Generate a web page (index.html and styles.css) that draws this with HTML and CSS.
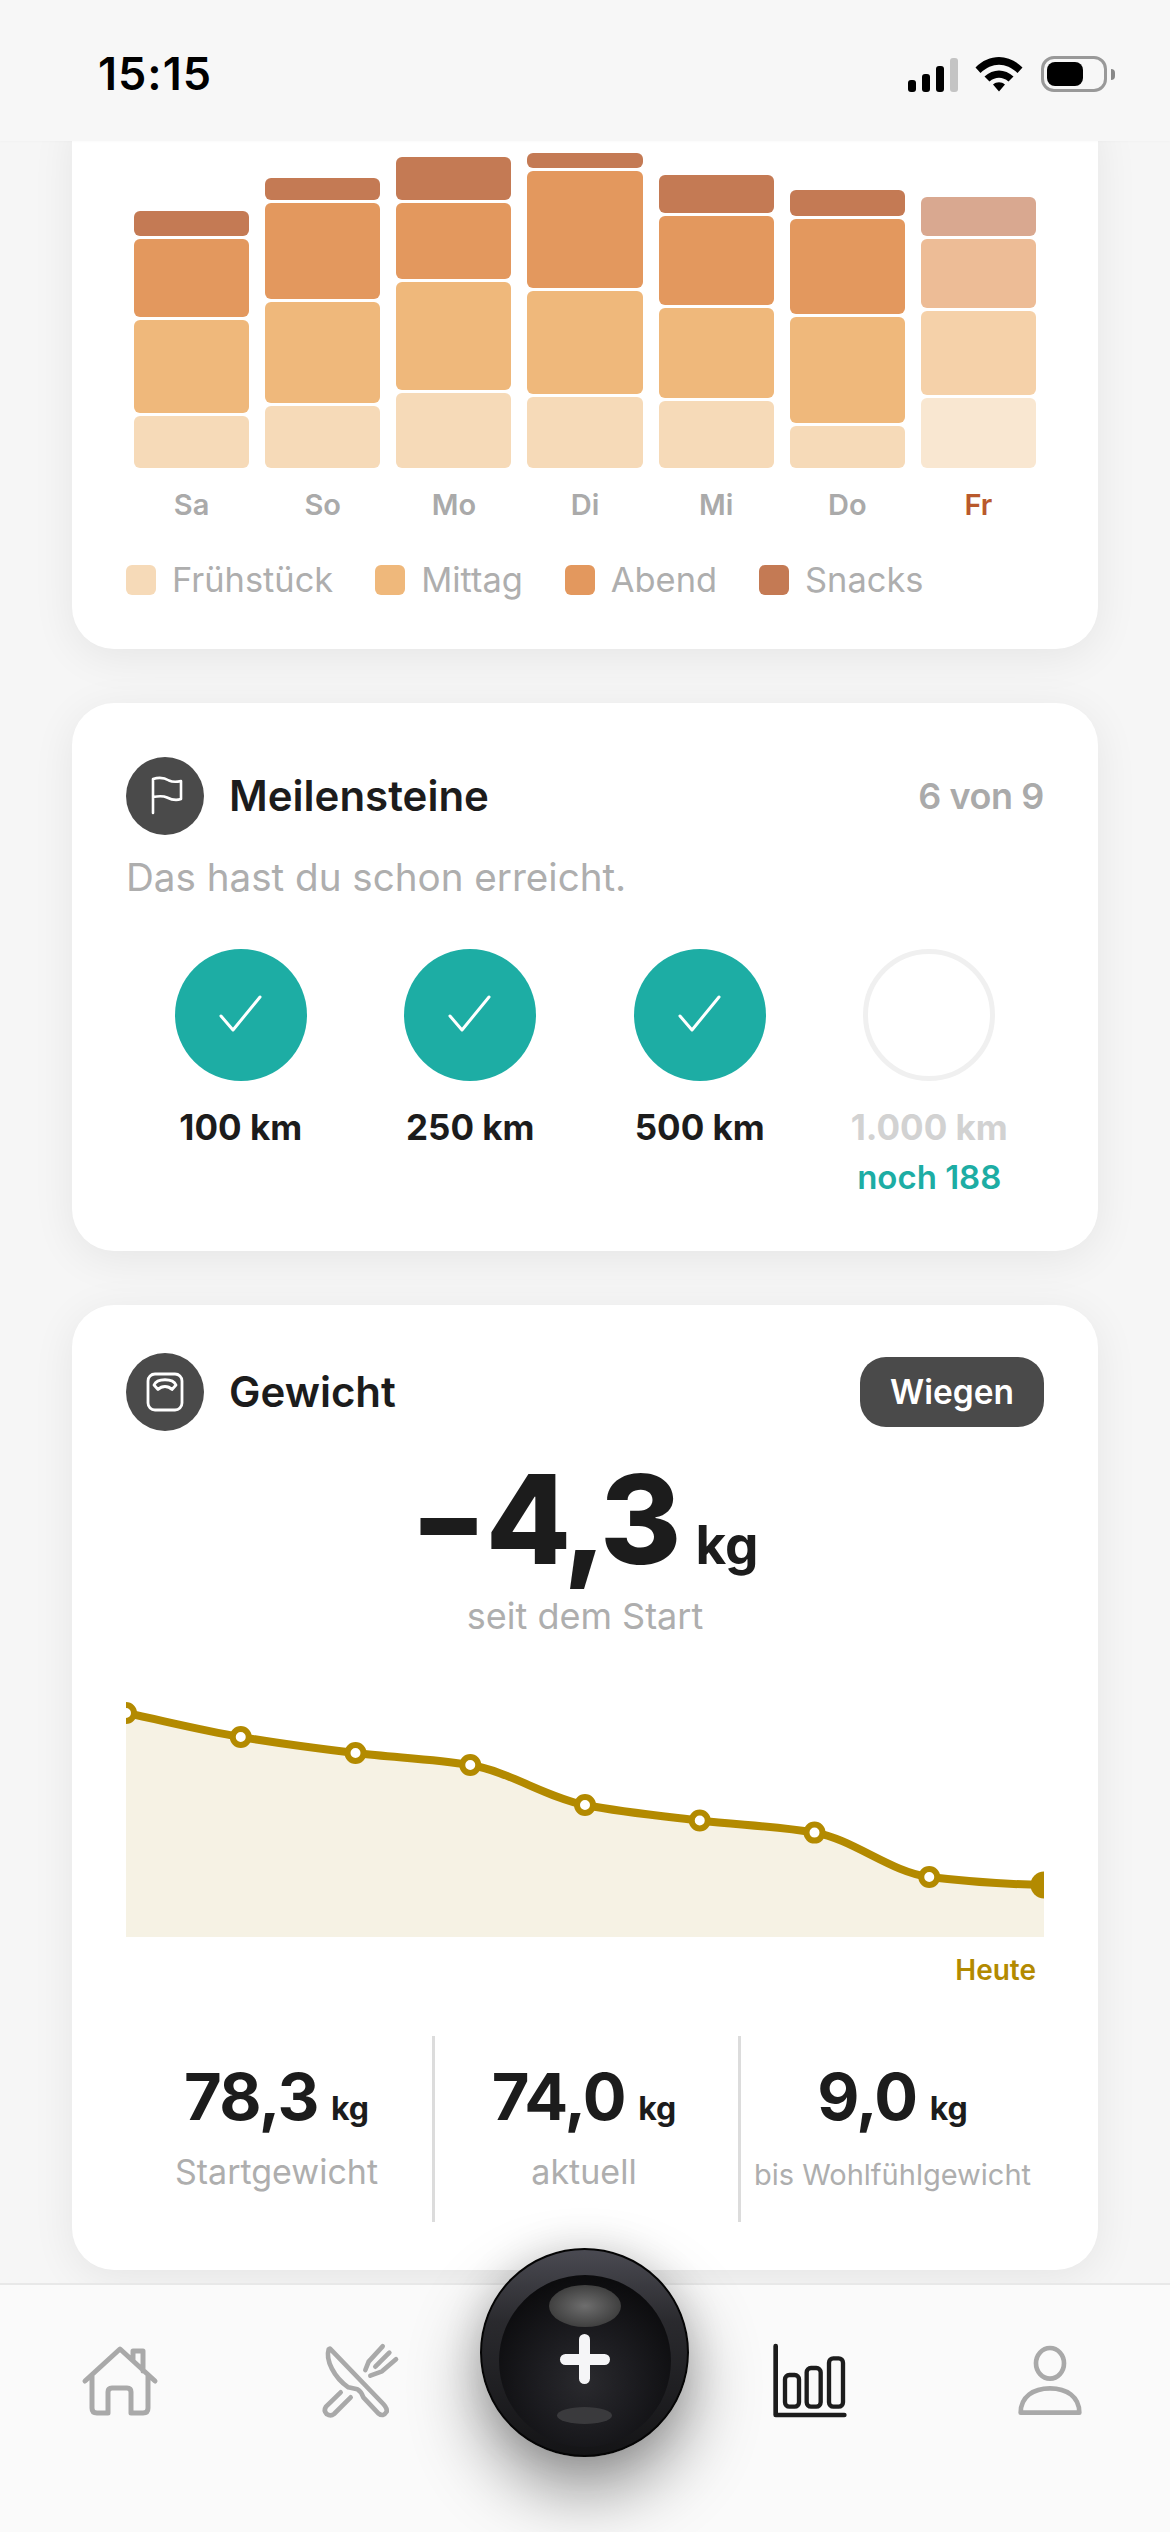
FILE: index.html
```html
<!DOCTYPE html>
<html lang="de">
<head>
<meta charset="utf-8">
<title>Statistik</title>
<link rel="stylesheet" href="styles.css">
</head>
<body>
<div class="app">
  <header class="status">
    <span class="time">15:15</span>
    <div class="status-icons">
      <div class="signal"><i class="s1"></i><i class="s2"></i><i class="s3"></i><i class="s4"></i></div>
      <svg class="wifi" viewBox="0 0 48 36" width="48" height="36"><path d="M0.5 11.5 C14 -2.5 34 -2.5 47.5 11.5 L42.5 17 C31 6 17 6 5.5 17 Z M9.5 20.5 C18 12.5 30 12.5 38.5 20.5 L33.5 25.5 C27.5 20.5 20.5 20.5 14.5 25.5 Z M18 28.5 C21.5 25.5 26.5 25.5 30 28.5 L24 35.5 Z" fill="#000"/></svg>
      <div class="battery"><div class="battery-body"><div class="battery-fill"></div></div><div class="battery-nub"></div></div>
    </div>
  </header>

  <main class="scroll">
    <section class="card card-meals">
      <div class="bars">
        <div class="bar"><div class="seg snack" style="height:25px"></div><div class="seg dinner" style="height:78px"></div><div class="seg lunch" style="height:93px"></div><div class="seg breakfast" style="height:52px"></div></div>
        <div class="bar"><div class="seg snack" style="height:22px"></div><div class="seg dinner" style="height:96px"></div><div class="seg lunch" style="height:101px"></div><div class="seg breakfast" style="height:62px"></div></div>
        <div class="bar"><div class="seg snack" style="height:43px"></div><div class="seg dinner" style="height:76px"></div><div class="seg lunch" style="height:108px"></div><div class="seg breakfast" style="height:75px"></div></div>
        <div class="bar"><div class="seg snack" style="height:15px"></div><div class="seg dinner" style="height:117px"></div><div class="seg lunch" style="height:103px"></div><div class="seg breakfast" style="height:71px"></div></div>
        <div class="bar"><div class="seg snack" style="height:38px"></div><div class="seg dinner" style="height:89px"></div><div class="seg lunch" style="height:90px"></div><div class="seg breakfast" style="height:67px"></div></div>
        <div class="bar"><div class="seg snack" style="height:26px"></div><div class="seg dinner" style="height:95px"></div><div class="seg lunch" style="height:106px"></div><div class="seg breakfast" style="height:42px"></div></div>
        <div class="bar today"><div class="seg snack" style="height:39px"></div><div class="seg dinner" style="height:69px"></div><div class="seg lunch" style="height:84px"></div><div class="seg breakfast" style="height:70px"></div></div>
      </div>
      <div class="days">
        <span>Sa</span><span>So</span><span>Mo</span><span>Di</span><span>Mi</span><span>Do</span><span class="day-today">Fr</span>
      </div>
      <div class="legend">
        <div class="legend-item"><i class="swatch breakfast"></i>Frühstück</div>
        <div class="legend-item"><i class="swatch lunch"></i>Mittag</div>
        <div class="legend-item"><i class="swatch dinner"></i>Abend</div>
        <div class="legend-item"><i class="swatch snack"></i>Snacks</div>
      </div>
    </section>

    <section class="card card-miles">
      <div class="card-head">
        <div class="head-left">
          <div class="round-icon">
            <svg viewBox="0 0 40 40" width="40" height="40" fill="none" stroke="#fff" stroke-width="2.6" stroke-linecap="round" stroke-linejoin="round"><path d="M8 37 V3 C14 1 20 2 24 4.500 C28 6.500 32 6 36 5 V23 C32 24.500 27 24 22 21.500 C18 19.500 13 20 8 21"/></svg>
          </div>
          <h2 class="card-title">Meilensteine</h2>
        </div>
        <span class="count">6 von 9</span>
      </div>
      <p class="sub">Das hast du schon erreicht.</p>
      <div class="miles">
        <div class="mile"><div class="mile-circle done"><svg viewBox="0 0 44 38" width="44" height="38" fill="none" stroke="#fff" stroke-width="3" stroke-linecap="round" stroke-linejoin="round"><path d="M2 21 L14 35 L41 2"/></svg></div><div class="mile-label">100 km</div></div>
        <div class="mile"><div class="mile-circle done"><svg viewBox="0 0 44 38" width="44" height="38" fill="none" stroke="#fff" stroke-width="3" stroke-linecap="round" stroke-linejoin="round"><path d="M2 21 L14 35 L41 2"/></svg></div><div class="mile-label">250 km</div></div>
        <div class="mile"><div class="mile-circle done"><svg viewBox="0 0 44 38" width="44" height="38" fill="none" stroke="#fff" stroke-width="3" stroke-linecap="round" stroke-linejoin="round"><path d="M2 21 L14 35 L41 2"/></svg></div><div class="mile-label">500 km</div></div>
        <div class="mile"><div class="mile-circle open"></div><div class="mile-label muted">1.000 km</div><div class="mile-left">noch 188</div></div>
      </div>
    </section>

    <section class="card card-weight">
      <div class="card-head">
        <div class="head-left">
          <div class="round-icon">
            <svg viewBox="0 0 40 40" width="40" height="40" fill="none" stroke="#fff" stroke-width="2.8" stroke-linecap="round" stroke-linejoin="round"><rect x="3" y="2" width="34" height="36" rx="7"/><path d="M9 13 C12 6 28 6 31 13 L27 17.500 C23 13.500 17 13.500 13 17.500 Z"/></svg>
          </div>
          <h2 class="card-title">Gewicht</h2>
        </div>
        <button class="weigh">Wiegen</button>
      </div>
      <div class="big"><span class="big-num"><span class="minus">−</span>4,3</span><span class="big-unit">kg</span></div>
      <p class="since">seit dem Start</p>
      <svg class="line-chart" viewBox="0 0 918 237" width="918" height="237">
        <path fill="#f6f2e4" d="M0,13 C38.25,21 76.5,30.6 114.75,37 C153,43.4 191.25,48.4 229.5,53 C267.75,57.6 306,58.8 344.25,65 C382.5,71.2 420.75,97.6 459,105 C497.25,112.4 535.5,116 573.75,120.5 C612,125 650.25,126.3 688.5,132.6 C726.75,138.9 765,172.5 803.25,177 C841.5,181.5 879.75,184.3 918,185 L918,237 L0,237 Z"/>
        <path fill="none" stroke="#b38a00" stroke-width="8" stroke-linecap="round" d="M0,13 C38.25,21 76.5,30.6 114.75,37 C153,43.4 191.25,48.4 229.5,53 C267.75,57.6 306,58.8 344.25,65 C382.5,71.2 420.75,97.6 459,105 C497.25,112.4 535.5,116 573.75,120.5 C612,125 650.25,126.3 688.5,132.6 C726.75,138.9 765,172.5 803.25,177 C841.5,181.5 879.75,184.3 918,185"/>
        <g fill="#fff" stroke="#b38a00" stroke-width="6">
          <circle cx="0" cy="13" r="8"/><circle cx="114.75" cy="37" r="8"/><circle cx="229.5" cy="53" r="8"/><circle cx="344.25" cy="65" r="8"/><circle cx="459" cy="105" r="8"/><circle cx="573.75" cy="120.5" r="8"/><circle cx="688.5" cy="132.6" r="8"/><circle cx="803.25" cy="177" r="8"/>
        </g>
        <circle cx="918" cy="185" r="13.500" fill="#b38a00"/>
      </svg>
      <div class="today-label">Heute</div>
      <div class="stats">
        <div class="stat"><div class="stat-val">78,3<span class="stat-unit">kg</span></div><div class="stat-name">Startgewicht</div></div>
        <div class="stat"><div class="stat-val">74,0<span class="stat-unit">kg</span></div><div class="stat-name">aktuell</div></div>
        <div class="stat stat-last"><div class="stat-val">9,0<span class="stat-unit">kg</span></div><div class="stat-name small">bis Wohlfühlgewicht</div></div>
      </div>
    </section>
  </main>

  <nav class="nav">
    <div class="nav-group">
      <svg class="nav-icon" viewBox="0 0 80 80" width="80" height="80" fill="none" stroke="#a9a9a9" stroke-width="5" stroke-linecap="round" stroke-linejoin="round"><path d="M5 41 L40 9 L75 41 M53 20 V11 H63 V31 M12 35 V68 Q12 73 17 73 H28 V52 Q28 48 32 48 H47 Q51 48 51 52 V73 H63 Q68 73 68 68 V35"/></svg>
      <svg class="nav-icon" viewBox="660 90 240 240" width="80" height="80" fill="none" stroke="#a9a9a9" stroke-width="14" stroke-linecap="round" stroke-linejoin="round"><path d="M686 118 C676 150 702 202 745 232 L772 238 Q784 245 790 262 L835 310 Q850 322 860 305 Q862 295 850 282 L690 116 Z M722 247 L678 290 Q670 302 680 312 Q692 320 702 312 L752 262 M848 109 L806 155 L796 180 M888 148 L846 184 L811 197 M868 128 L826 170"/></svg>
    </div>
    <div class="nav-group">
      <svg class="nav-icon" viewBox="60 90 240 240" width="80" height="80" fill="none" stroke="#1c1c1c" stroke-linecap="round" stroke-linejoin="round"><path stroke-width="14" d="M77 108 V315 H283"/><g stroke-width="13"><rect x="105" y="195" width="42" height="95" rx="13"/><rect x="170" y="174" width="42" height="116" rx="13"/><rect x="237" y="145" width="42" height="145" rx="13"/></g></svg>
      <svg class="nav-icon" viewBox="780 90 240 240" width="80" height="80" fill="none" stroke="#a9a9a9" stroke-width="14" stroke-linecap="round" stroke-linejoin="round"><ellipse cx="900" cy="160" rx="42" ry="46"/><path d="M812 308 C812 260 850 235 900 235 C950 235 988 260 988 308 Z"/></svg>
    </div>
    <button class="fab" aria-label="Hinzufügen">
      <span class="fab-inner">
        <span class="fab-glow"></span>
        <span class="fab-plus"></span>
        <span class="fab-low"></span>
      </span>
    </button>
  </nav>
</div>
</body>
</html>
```

FILE: styles.css
```css
* { box-sizing: border-box; }
html, body { margin: 0; padding: 0; }
body { background: #f6f6f6; font-family: "Inter", "Liberation Sans", sans-serif; color: #1c1c1c; }
h2, p { margin: 0; }

.app { width: 1170px; height: 2532px; display: flex; flex-direction: column; overflow: hidden; position: relative; }

/* status bar */
.status { height: 141px; flex: none; background: #f7f7f7; display: flex; justify-content: space-between; align-items: flex-start; padding: 51px 55px 0 98px; position: relative; z-index: 2; box-shadow: 0 1px 2px rgba(0,0,0,.02); }
.time { font-size: 45px; line-height: 46px; font-weight: 600; color: #000; letter-spacing: 1px; }
.status-icons { display: flex; align-items: flex-start; gap: 0; padding-top: 5px; }
.signal { display: flex; align-items: flex-end; gap: 5.5px; height: 35px; margin-top: 1px; margin-right: 17px; }
.signal i { display: block; width: 8.500px; border-radius: 3px; background: #000; }
.s1 { height: 12px; }
.s2 { height: 18px; }
.s3 { height: 26px; }
.signal .s4 { height: 34px; background: #c4c4c4; }
.wifi { margin-right: 18px; }
.battery { display: flex; align-items: center; height: 36px; }
.battery-body { width: 66px; height: 36px; border: 3px solid #999; border-radius: 13px; padding: 3px; }
.battery-fill { width: 36px; height: 24px; background: #000; border-radius: 8px; }
.battery-nub { width: 4px; height: 11px; margin-left: 4px; background: #888; border-radius: 0 6px 6px 0; }

/* scrolling content */
.scroll { flex: 1; min-height: 0; overflow: hidden; padding: 0 72px; display: flex; flex-direction: column; gap: 54px; background: #f6f6f6; }
.card { background: #fff; border-radius: 42px; padding: 54px; box-shadow: 0 8px 44px rgba(0,0,0,.07); flex: none; }

.card-meals { margin-top: -40px; padding: 52px 54px 48px; }
.bars { height: 315px; padding: 0 8px; display: grid; grid-template-columns: repeat(7, 1fr); gap: 16px; align-items: end; }
.bar { display: flex; flex-direction: column; gap: 3px; }
.seg { border-radius: 6px; }
.snack { background: #c47a54; }
.dinner { background: #e3985e; }
.lunch { background: #efb87b; }
.breakfast { background: #f6dab8; }
.today .seg { opacity: .65; }
.days { margin-top: 20px; padding: 0 8px; display: grid; grid-template-columns: repeat(7, 1fr); gap: 16px; text-align: center; font-size: 29px; line-height: 34px; font-weight: 600; color: #aaa; }
.day-today { color: #b9592c; }
.legend { margin-top: 37px; display: flex; gap: 42px; font-size: 34.400px; line-height: 42px; color: #aeaeae; }
.legend-item { display: flex; align-items: center; gap: 16px; }
.swatch { display: block; width: 30px; height: 30px; border-radius: 6px; }

/* card headers */
.card-head { display: flex; justify-content: space-between; align-items: center; }
.head-left { display: flex; align-items: center; gap: 25px; }
.round-icon { width: 78px; height: 78px; border-radius: 50%; background: #4a4a4a; display: flex; align-items: center; justify-content: center; }
.card-title { font-size: 42px; line-height: 48px; font-weight: 600; letter-spacing: 0; }
.count { font-size: 36px; line-height: 42px; font-weight: 600; color: #aaa; letter-spacing: -.4px; }

/* milestones */
.sub { margin-top: 19px; font-size: 38.600px; line-height: 46px; color: #aeaeae; }
.miles { margin-top: 49px; display: grid; grid-template-columns: repeat(4, 1fr); }
.mile { display: flex; flex-direction: column; align-items: center; }
.mile-circle { width: 132px; height: 132px; border-radius: 50%; display: flex; align-items: center; justify-content: center; }
.mile-circle svg { margin-top: -3px; }
.done { background: #1dada4; }
.open { border: 5px solid #f0f0f0; }
.mile-label { margin-top: 26px; font-size: 35px; line-height: 40px; font-weight: 700; }
.muted { color: #d2d2d2; }
.mile-left { margin-top: 10px; font-size: 33px; line-height: 40px; font-weight: 600; color: #1dada4; }

/* weight */
.card-weight { padding: 48px 54px 48px; }
.weigh { width: 184px; height: 70px; border: 0; border-radius: 26px; background: #4a4a4a; color: #fff; font: 600 33.500px/40px "Inter", "Liberation Sans", sans-serif; padding: 0; }
.big { margin-top: 33px; display: flex; justify-content: center; align-items: baseline; gap: 18px; }
.big-num { font-size: 124px; line-height: 110px; font-weight: 800; letter-spacing: -4px; }
.minus { font-size: 107px; font-weight: 900; line-height: 1px; vertical-align: 6px; letter-spacing: 0; }
.big-unit { font-size: 53px; line-height: 60px; font-weight: 700; }
.since { margin-top: 20px; text-align: center; font-size: 36px; line-height: 42px; color: #aeaeae; }
.line-chart { display: block; margin-top: 63px; overflow: hidden; }
.today-label { margin-top: 16px; padding-right: 8px; text-align: right; font-size: 28px; line-height: 34px; font-weight: 600; color: #b38a00; }
.stats { margin-top: 49px; height: 186px; display: grid; grid-template-columns: repeat(3, 1fr); }
.stat { display: flex; flex-direction: column; align-items: center; padding: 23px 5px 0 0; border-left: 3px solid #dcdcdc; }
.stat:first-child { border-left: 0; }
.stat-last { padding-right: 0; }
.stat-val { font-size: 65px; line-height: 76px; font-weight: 700; letter-spacing: -1.500px; }
.stat-unit { margin-left: 13px; font-size: 32px; font-weight: 700; letter-spacing: 0; }
.stat-name { margin-top: 4px; font-size: 34px; line-height: 42px; color: #aeaeae; }
.stat-name.small { font-size: 29px; margin-top: 7px; }

/* bottom nav */
.nav { height: 249px; flex: none; background: #fafafa; border-top: 2px solid #e8e8e8; padding: 55px 80px 0; display: flex; justify-content: space-between; align-items: flex-start; position: relative; z-index: 3; }
.nav-group { width: 320px; display: flex; justify-content: space-between; }
.nav-icon { display: block; }
.fab { position: absolute; left: 480px; top: -37px; width: 209px; height: 209px; padding: 12px 0 0 0; border: 2px solid #050505; border-radius: 50%; background: linear-gradient(180deg, #4a4a52 0%, #2a2a2e 35%, #141416 100%); box-shadow: 0 34px 70px rgba(0,0,0,.42), 0 0 40px rgba(0,0,0,.12); display: block; }
.fab-inner { position: relative; display: block; width: 172px; height: 172px; margin: 5px auto 0; border-radius: 50%; background: radial-gradient(circle at 50% 62%, #2a2a2e 0%, #1c1c20 35%, #0c0c0e 75%, #060606 100%); }
.fab-glow { position: absolute; left: 50px; top: 10px; width: 72px; height: 42px; border-radius: 50%; background: radial-gradient(ellipse at 50% 50%, #6e6e6e 0%, #4a4a4a 55%, #2c2c2c 100%); }
.fab-plus { position: absolute; left: 61px; top: 59px; width: 50px; height: 50px; }
.fab-plus::before, .fab-plus::after { content: ""; position: absolute; background: #f5f5f7; border-radius: 6px; }
.fab-plus::before { left: 19.500px; top: 0; width: 11px; height: 50px; }
.fab-plus::after { left: 0; top: 19.500px; width: 50px; height: 11px; }
.fab-low { position: absolute; left: 58px; top: 132px; width: 55px; height: 17px; border-radius: 50%; background: #3a3a3d; }
```
